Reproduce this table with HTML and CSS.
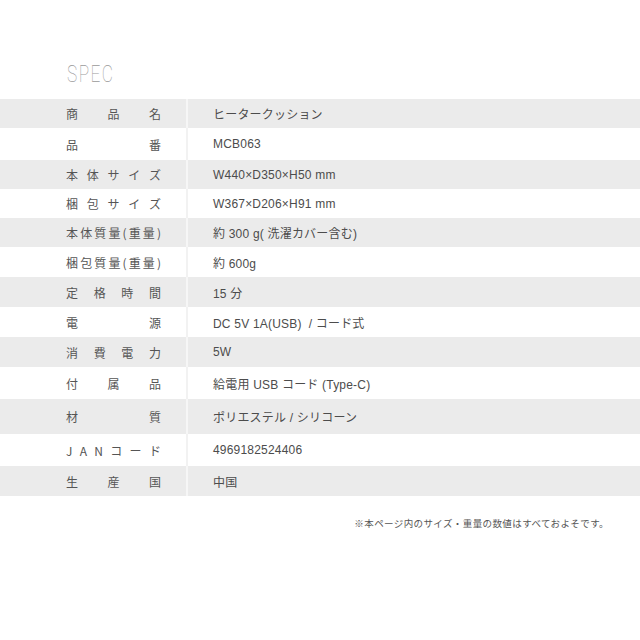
FILE: index.html
```html
<!DOCTYPE html>
<html lang="ja">
<head>
<meta charset="utf-8">
<link rel="stylesheet" href="styles.css">
</head>
<body>
<div class="page">
  <h1 class="title">SPEC</h1>
  <div class="spec">
    <div class="row gray r29"><div class="label"><span>商</span><span>品</span><span>名</span></div><div class="value">ヒータークッション</div></div>
    <div class="row r32"><div class="label"><span>品</span><span>番</span></div><div class="value">MCB063</div></div>
    <div class="row gray r29"><div class="label"><span>本</span><span>体</span><span>サ</span><span>イ</span><span>ズ</span></div><div class="value">W440×D350×H50 mm</div></div>
    <div class="row r29"><div class="label"><span>梱</span><span>包</span><span>サ</span><span>イ</span><span>ズ</span></div><div class="value">W367×D206×H91 mm</div></div>
    <div class="row gray r29"><div class="label"><span>本</span><span>体</span><span>質</span><span>量</span><span>(</span><span>重</span><span>量</span><span>)</span></div><div class="value">約 300 g( 洗濯カバー含む)</div></div>
    <div class="row r30"><div class="label"><span>梱</span><span>包</span><span>質</span><span>量</span><span>(</span><span>重</span><span>量</span><span>)</span></div><div class="value">約 600g</div></div>
    <div class="row gray r30"><div class="label"><span>定</span><span>格</span><span>時</span><span>間</span></div><div class="value">15 分</div></div>
    <div class="row r30"><div class="label"><span>電</span><span>源</span></div><div class="value">DC 5V 1A(USB)&nbsp; / コード式</div></div>
    <div class="row gray r30"><div class="label"><span>消</span><span>費</span><span>電</span><span>力</span></div><div class="value">5W</div></div>
    <div class="row r32"><div class="label"><span>付</span><span>属</span><span>品</span></div><div class="value">給電用 USB コード (Type-C)</div></div>
    <div class="row gray r35"><div class="label"><span>材</span><span>質</span></div><div class="value">ポリエステル / シリコーン</div></div>
    <div class="row r32"><div class="label"><span>J</span><span>A</span><span>N</span><span>コ</span><span>ー</span><span>ド</span></div><div class="value">4969182524406</div></div>
    <div class="row gray r30"><div class="label"><span>生</span><span>産</span><span>国</span></div><div class="value">中国</div></div>
  </div>
  <p class="note">※本ページ内のサイズ・重量の数値はすべておよそです。</p>
</div>
</body>
</html>
```
FILE: styles.css
```css
html, body {
  margin: 0;
  padding: 0;
  background: #ffffff;
}
body {
  font-family: "Noto Sans CJK JP", "Liberation Sans", sans-serif;
  color: #4a4a4a;
}
.page {
  width: 640px;
  height: 640px;
  padding-top: 59px;
  box-sizing: border-box;
}
.title {
  margin: 0 0 0 67px;
  height: 40px;
  font-family: "Roboto", sans-serif;
  font-weight: 100;
  font-size: 24px;
  line-height: 30px;
  color: #9a9a9a;
  letter-spacing: 2px;
  transform: scaleX(0.72);
  transform-origin: left center;
}
.spec {
  display: flex;
  flex-direction: column;
}
.row {
  display: flex;
  align-items: center;
  background: #ffffff;
}
.row.gray {
  background: #ebebeb;
}
.r29 { height: 29px; }
.r30 { height: 30px; }
.r32 { height: 32px; }
.r35 { height: 35px; }
.label {
  width: 188px;
  height: 100%;
  box-sizing: border-box;
  padding: 0 25px 0 66px;
  display: flex;
  align-items: center;
  justify-content: space-between;
  border-right: 2px solid #f2f2f2;
  font-size: 12px;
  color: #555555;
}
.row.gray .label {
  border-right-color: #f6f6f6;
}
.value {
  padding-left: 25px;
  font-family: "Liberation Sans", "Noto Sans CJK JP", sans-serif;
  font-size: 12px;
  letter-spacing: 0.2px;
  color: #4c4c4c;
}
.note {
  margin: 20px 31px 0 0;
  text-align: right;
  font-size: 9.5px;
  letter-spacing: 0.4px;
  color: #555555;
}
```
